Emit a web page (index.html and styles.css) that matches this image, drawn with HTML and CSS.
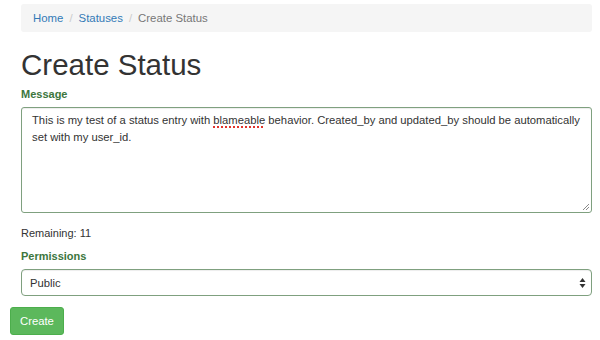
FILE: index.html
```html
<!DOCTYPE html>
<html lang="en">
<head>
    <meta charset="UTF-8">
    <meta name="viewport" content="width=device-width, initial-scale=1.0">
    <title>Create Status</title>
    <link rel="stylesheet" href="styles.css">
</head>
<body>
    <div class="page">
        <div class="content">
            <ol class="breadcrumb">
                <li><a href="#">Home</a></li>
                <li><a href="#">Statuses</a></li>
                <li class="active">Create Status</li>
            </ol>

            <h1>Create Status</h1>

            <form class="status-form">
                <div class="form-group has-success">
                    <label class="control-label">Message</label>
                    <div class="form-control textarea">
                        This is my test of a status entry with <span class="misspelled">blameable</span> behavior. Created_by and updated_by should be automatically set with my user_id.
                        <svg class="grip" width="7" height="7" viewBox="0 0 7 7">
                            <path d="M1 7 L7 1 M4 7 L7 4" stroke="#8a8a8a" stroke-width="1" fill="none"/>
                        </svg>
                    </div>
                </div>

                <p class="remaining">Remaining: 11</p>

                <div class="form-group has-success">
                    <label class="control-label">Permissions</label>
                    <div class="select-wrap">
                        <select class="form-control">
                            <option>Public</option>
                            <option>Private</option>
                        </select>
                        <svg class="arrows" width="7" height="12" viewBox="0 0 7 12">
                            <path d="M3.5 1 L6.5 5 L0.5 5 Z M3.5 11 L6.5 7 L0.5 7 Z" fill="#333"/>
                        </svg>
                    </div>
                </div>
            </form>
        </div>

        <div class="form-actions">
            <button type="button" class="btn btn-success">Create</button>
        </div>
    </div>
</body>
</html>
```

FILE: styles.css
```css
:root {
    --link-color: #337ab7;
    --text-dark: #333333;
    --muted: #777777;
    --success-text: #3c763d;
    --success-border: #7fa07f;
    --btn-success: #5cb85c;
    --btn-success-border: #4cae4c;
    --breadcrumb-bg: #f5f5f5;
}

body {
    margin: 0;
    font-family: 'Liberation Sans', Arial, sans-serif;
    font-size: 11px;
    line-height: 17px;
    color: var(--text-dark);
    background: #ffffff;
}

.page {
    padding: 4px 8px 0 10px;
}

.content {
    padding-left: 11px;
}

/* Breadcrumb */
.breadcrumb {
    display: flex;
    margin: 0;
    padding: 6px 12px;
    height: 16px;
    list-style: none;
    background-color: var(--breadcrumb-bg);
    border-radius: 3px;
    font-size: 11.4px;
}

.breadcrumb li + li::before {
    content: '/';
    padding: 0 6px;
    color: #cccccc;
}

.breadcrumb a {
    color: var(--link-color);
    text-decoration: none;
}

.breadcrumb .active {
    color: var(--muted);
}

h1 {
    margin: 16px 0 5px;
    font-size: 29.5px;
    line-height: 33px;
    font-weight: 500;
    color: var(--text-dark);
}

.form-group {
    margin-bottom: 12px;
}

.control-label {
    display: block;
    margin-bottom: 4px;
    font-weight: bold;
    color: var(--success-text);
}

.form-control {
    display: block;
    box-sizing: border-box;
    width: 100%;
    font-family: inherit;
    font-size: 11.25px;
    color: var(--text-dark);
    background: #ffffff;
    border: 1px solid var(--success-border);
    border-radius: 3px;
    box-shadow: inset 0 1px 1px rgba(0, 0, 0, 0.075);
}

.textarea {
    position: relative;
    height: 106px;
    padding: 4px 10px;
    line-height: 17px;
}

.misspelled {
    text-decoration: underline dotted #e0342c;
    text-decoration-thickness: 1.5px;
    text-underline-offset: 2px;
}

.grip {
    position: absolute;
    right: 2px;
    bottom: 2px;
}

.remaining {
    margin: 9px 0 6px;
}

.select-wrap {
    position: relative;
}

select.form-control {
    height: 27px;
    padding: 0 8px;
    appearance: none;
    -webkit-appearance: none;
    border-radius: 4px;
    outline: none;
}

.arrows {
    position: absolute;
    right: 6px;
    top: 8px;
    pointer-events: none;
}

.form-actions {
    margin-top: -1px;
}

.btn {
    display: inline-block;
    height: 28px;
    padding: 0 9px;
    font-family: inherit;
    font-size: 11.3px;
    color: #ffffff;
    border: 1px solid transparent;
    border-radius: 3px;
}

.btn-success {
    background-color: var(--btn-success);
    border-color: var(--btn-success-border);
}
```
